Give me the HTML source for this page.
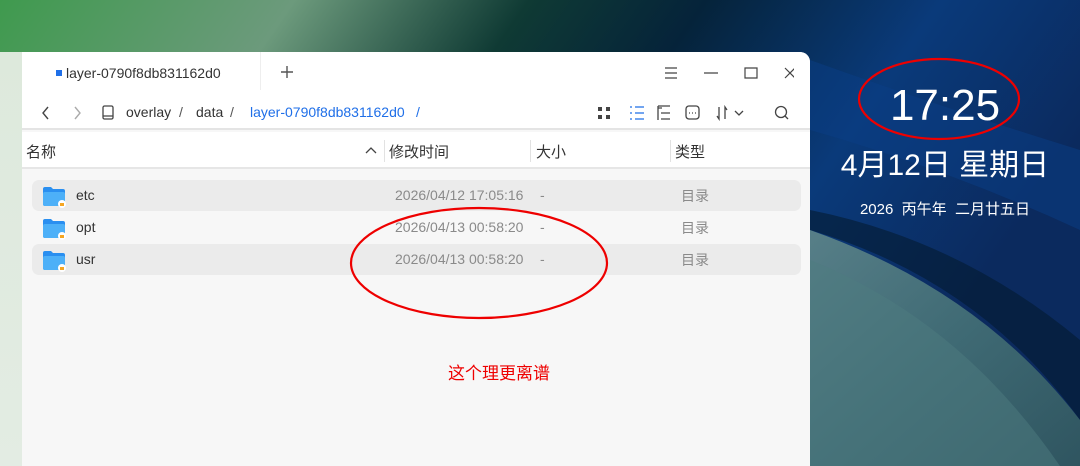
<!DOCTYPE html>
<html><head><meta charset="utf-8"><style>
*{margin:0;padding:0;box-sizing:border-box}
body{width:1080px;height:466px;overflow:hidden;position:relative;font-family:"Liberation Sans","Noto Sans CJK SC",sans-serif;background:#06213a}
.bg{position:absolute;left:0;top:0}
.leftstrip{position:absolute;left:0;top:52px;width:22px;height:414px;background:linear-gradient(#dde9dc,#e3ece3)}
.win{position:absolute;left:22px;top:52px;width:788px;height:414px;background:#f7f7f7;border-top-right-radius:10px;overflow:hidden}
.top{position:absolute;left:0;top:0;width:788px;height:78px;background:#fff;border-bottom:2px solid #e4e4e4}
.tab{position:absolute;left:34px;top:13px;font-size:14px;color:#333}
.tab i{display:inline-block;width:6px;height:6px;background:#1f6fe8;margin-right:4px;vertical-align:2px}
.sep{position:absolute;left:238px;top:0;width:1px;height:38px;background:#eee}
.t{position:absolute;font-size:14px;color:#333}
.hdr{position:absolute;left:0;top:80px;width:788px;height:37px;background:#fff;border-bottom:2px solid #e6e6e6;font-size:15px;color:#333}
.hdr span{position:absolute;top:11px;line-height:20px}
.vl{position:absolute;top:8px;width:1px;height:22px;background:#e2e2e2}
.row{position:absolute;left:10px;width:769px;height:31px;border-radius:7px;font-size:14px}
.row.g{background:#ebebeb}
.row span{position:absolute;top:6px;line-height:18px;color:#8a8a8a}
.row .n{left:44px;color:#333}
.row .k{top:7px}
.fold{position:absolute;left:10px;top:6px}
.clk{position:absolute;color:#fff;text-align:center;width:270px;left:810px}
</style></head><body>
<svg class="bg" width="1080" height="466">
<defs>
<linearGradient id="g1" x1="0" y1="0" x2="1" y2="0.3"><stop offset="0" stop-color="#3f9a4e"/><stop offset="0.25" stop-color="#6c9a7c"/><stop offset="0.45" stop-color="#0f3a34"/><stop offset="0.6" stop-color="#05233a"/><stop offset="0.8" stop-color="#0a3a7a"/><stop offset="1" stop-color="#0b2a5e"/></linearGradient>
<linearGradient id="g2" x1="0" y1="0" x2="1" y2="1"><stop offset="0" stop-color="#577f88"/><stop offset="0.5" stop-color="#3f6a74"/><stop offset="1" stop-color="#2f5560"/></linearGradient>
</defs>
<rect width="1080" height="466" fill="url(#g1)"/>
<path d="M810 60 Q950 110 1080 150 L1080 230 Q950 170 810 130Z" fill="#0a3d86" opacity="0.5"/>
<path d="M810 210 Q960 240 1080 340 L1080 420 Q980 280 810 230Z" fill="#031a30" opacity="0.6"/>
<path d="M810 230 Q980 290 1080 420 L1080 466 L810 466Z" fill="url(#g2)"/>
<path d="M810 260 Q960 320 1060 466 L810 466Z" fill="#4e7c80" opacity="0.5"/>
</svg>
<div class="leftstrip"></div>
<div class="win">
<div class="top">
<div class="tab"><i></i>layer-0790f8db831162d0</div>
<div class="sep"></div>
<svg style="position:absolute;left:258px;top:13px" width="14" height="14"><path d="M7 1v12M1 7h12" stroke="#555" stroke-width="1.4"/></svg>
<svg style="position:absolute;left:642px;top:14px" width="130" height="14" fill="none" stroke="#444" stroke-width="1.2">
<path d="M1 2h12M1 7h12M1 12h12"/><path d="M40 7h14"/><path d="M81 2h12v10h-12z"/><path d="M121 2l10 10M131 2l-10 10"/></svg>
<svg style="position:absolute;left:18px;top:54px" width="60" height="14" fill="none" stroke-width="1.4"><path d="M8 1l-5 6 5 6" stroke="#444"/><path d="M35 1l5 6-5 6" stroke="#aaa"/></svg>
<svg style="position:absolute;left:79px;top:53px" width="14" height="16" fill="none" stroke="#444" stroke-width="1.3"><rect x="2" y="1" width="10" height="13" rx="1.5"/><path d="M2 11h10"/></svg>
<span class="t" style="left:104px;top:52px">overlay</span><span class="t" style="left:157px;top:52px;color:#555">/</span>
<span class="t" style="left:174px;top:52px">data</span><span class="t" style="left:208px;top:52px;color:#555">/</span>
<span class="t" style="left:228px;top:52px;color:#1f6fe8">layer-0790f8db831162d0</span><span class="t" style="left:394px;top:52px;color:#1f6fe8">/</span>
<svg style="position:absolute;left:574px;top:52px" width="200" height="18" fill="none" stroke-width="1.3">
<g fill="#444"><rect x="2" y="3" width="4" height="4"/><rect x="10" y="3" width="4" height="4"/><rect x="2" y="11" width="4" height="4"/><rect x="10" y="11" width="4" height="4"/></g>
<g stroke="#1f6fe8"><path d="M34 3h2M34 9h2M34 15h2M39 3h9M39 9h9M39 15h9"/></g>
<g stroke="#444"><path d="M62 2h12M62 2v14M65 9h9M65 15h9M62 4h4"/><rect x="90" y="2" width="13" height="13" rx="3"/><path d="M93 9h1M96 9h1M99 9h1"/><path d="M123 3v12l-2-3M129 15v-12l2 3"/><path d="M139 7l4 4 4-4"/><circle cx="185" cy="8" r="5.5"/><path d="M189 12l3 3"/></g>
</svg>
</div>
<div class="hdr">
<span style="left:4px">名称</span>
<svg style="position:absolute;left:343px;top:14px" width="12" height="8" fill="none" stroke="#444" stroke-width="1.3"><path d="M1 7l5-5 5 5"/></svg>
<div class="vl" style="left:362px"></div><span style="left:367px">修改时间</span>
<div class="vl" style="left:508px"></div><span style="left:514px">大小</span>
<div class="vl" style="left:648px"></div><span style="left:653px">类型</span>
</div>
<div class="row g" style="top:128px"><svg class="fold" width="24" height="22"><path d="M1 3a2 2 0 0 1 2-2h6l2 2h10a2 2 0 0 1 2 2v13a2 2 0 0 1-2 2H3a2 2 0 0 1-2-2z" fill="#2a8ff0"/><rect x="1" y="6" width="22" height="14" rx="2" fill="#4db0f8"/><circle cx="20" cy="18" r="4" fill="#fff"/><rect x="18" y="17" width="4" height="3" fill="#f5a623"/></svg><span class="n">etc</span><span style="left:363px">2026/04/12 17:05:16</span><span style="left:508px">-</span><span class="k" style="left:649px">目录</span></div>
<div class="row" style="top:160px"><svg class="fold" width="24" height="22"><path d="M1 3a2 2 0 0 1 2-2h6l2 2h10a2 2 0 0 1 2 2v13a2 2 0 0 1-2 2H3a2 2 0 0 1-2-2z" fill="#2a8ff0"/><rect x="1" y="6" width="22" height="14" rx="2" fill="#4db0f8"/><circle cx="20" cy="18" r="4" fill="#fff"/><rect x="18" y="17" width="4" height="3" fill="#f5a623"/></svg><span class="n">opt</span><span style="left:363px">2026/04/13 00:58:20</span><span style="left:508px">-</span><span class="k" style="left:649px">目录</span></div>
<div class="row g" style="top:192px"><svg class="fold" width="24" height="22"><path d="M1 3a2 2 0 0 1 2-2h6l2 2h10a2 2 0 0 1 2 2v13a2 2 0 0 1-2 2H3a2 2 0 0 1-2-2z" fill="#2a8ff0"/><rect x="1" y="6" width="22" height="14" rx="2" fill="#4db0f8"/><circle cx="20" cy="18" r="4" fill="#fff"/><rect x="18" y="17" width="4" height="3" fill="#f5a623"/></svg><span class="n">usr</span><span style="left:363px">2026/04/13 00:58:20</span><span style="left:508px">-</span><span class="k" style="left:649px">目录</span></div>
<div style="position:absolute;left:426px;top:307px;font-size:17px;color:#e00">这个理更离谱</div>
</div>
<div class="clk" style="top:81px;font-size:44px;line-height:50px">17:25</div>
<div class="clk" style="top:146px;font-size:30px;line-height:40px">4月12日 星期日</div>
<div class="clk" style="top:200px;font-size:15px;line-height:20px">2026&nbsp; 丙午年&nbsp; 二月廿五日</div>
<svg style="position:absolute;left:0;top:0" width="1080" height="466" fill="none" stroke="#e00" stroke-width="2.2">
<ellipse cx="939" cy="99" rx="80" ry="40"/>
<ellipse cx="479" cy="263" rx="128" ry="55"/>
</svg>
</body></html>
